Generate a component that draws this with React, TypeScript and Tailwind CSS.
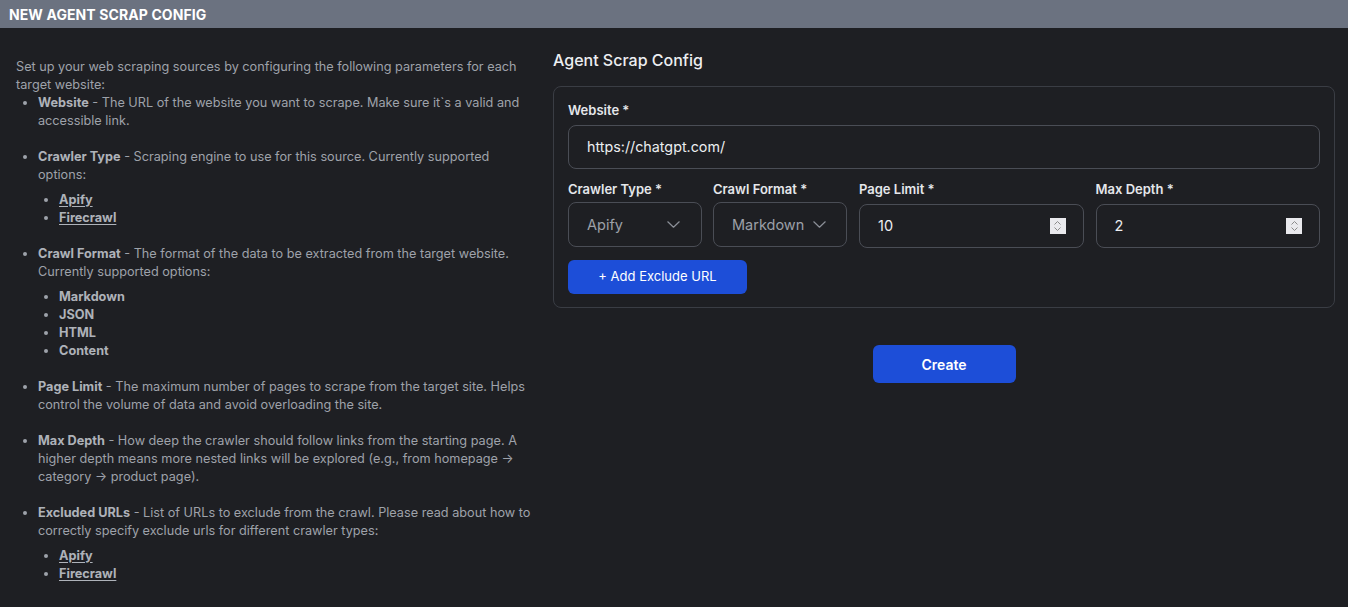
import React from "react";

const Chevron = () => (
  <svg width="13" height="7" viewBox="0 0 13 7" fill="none" className="shrink-0">
    <path d="M0.8 0.8l5.7 5.4 5.7-5.4" stroke="#8b8f97" strokeWidth="1.2" strokeLinecap="round" strokeLinejoin="round" />
  </svg>
);

const Spinner = () => (
  <div className="w-4 h-4 bg-[#e9e9ed] flex flex-col items-center justify-center gap-[2px]">
    <svg width="7" height="4" viewBox="0 0 7 4" fill="none">
      <path d="M0.5 3.5L3.5 0.5 6.5 3.5" stroke="#8a8a8a" strokeWidth="1" />
    </svg>
    <svg width="7" height="4" viewBox="0 0 7 4" fill="none">
      <path d="M0.5 0.5L3.5 3.5 6.5 0.5" stroke="#8a8a8a" strokeWidth="1" />
    </svg>
  </div>
);

const Item = ({ term, children, sub }: { term: string; children: React.ReactNode; sub?: React.ReactNode }) => (
  <li className="list-disc mb-[18px]">
    <span className="font-bold text-[#aeb2b9]">{term}</span> - {children}
    {sub}
  </li>
);

const Sub = ({ items, links }: { items: string[]; links?: boolean }) => (
  <ul className="mt-[7px] pl-[21px]">
    {items.map((t) => (
      <li key={t} className="list-disc">
        <span className={"font-bold text-[#aeb2b9] " + (links ? "underline underline-offset-2" : "")}>{t}</span>
      </li>
    ))}
  </ul>
);

export default function App() {
  return (
    <div className="min-h-[607px] w-full bg-[#1e1f23] font-['Inter',sans-serif]">
      <div className="h-[28px] bg-[#6b7280] flex items-center px-[9px]">
        <span className="text-white font-bold text-[14px] tracking-[0.1px]">NEW AGENT SCRAP CONFIG</span>
      </div>
      <div className="flex pl-4 pr-[13px] gap-[17px] pt-[20px]">
        <div className="w-[520px] shrink-0 mt-[10px] text-[12.7px] leading-[18px] text-[#9ea2aa]">
          <p className="pr-[6px]">Set up your web scraping sources by configuring the following parameters for each target website:</p>
          <ul className="pl-[22px]">
            <Item term="Website">The URL of the website you want to scrape. Make sure it`s a valid and accessible link.</Item>
            <Item term="Crawler Type" sub={<Sub items={["Apify", "Firecrawl"]} links />}>
              Scraping engine to use for this source. Currently supported options:
            </Item>
            <Item term="Crawl Format" sub={<Sub items={["Markdown", "JSON", "HTML", "Content"]} />}>
              The format of the data to be extracted from the target website. Currently supported options:
            </Item>
            <Item term="Page Limit">
              The maximum number of pages to scrape from the target site. Helps control the volume of data and avoid overloading the site.
            </Item>
            <Item term="Max Depth">
              How deep the crawler should follow links from the starting page. A higher depth means more nested links will be explored (e.g., from homepage → category → product page).
            </Item>
            <Item term="Excluded URLs" sub={<Sub items={["Apify", "Firecrawl"]} links />}>
              List of URLs to exclude from the crawl. Please read about how to correctly specify exclude urls for different crawler types:
            </Item>
          </ul>
        </div>
        <div className="flex-1 flex flex-col">
          <h2 className="text-[16px] leading-[24px] font-medium text-[#eceef1]">Agent Scrap Config</h2>
          <div className="mt-[14px] border border-[#3a3d44] rounded-[8px] px-[14px] pt-[14px] pb-[13px]">
            <label className="block text-[13px] leading-[18px] font-semibold text-[#e5e7eb]">Website *</label>
            <div className="mt-[6px] h-[44px] border border-[#4a4d55] rounded-[8px] flex items-center px-[18px] text-[14.3px] text-[#eceef1]">
              https://chatgpt.com/
            </div>
            <div className="mt-[11px] flex gap-[12px]">
              <div className="w-[134px] shrink-0">
                <div className="text-[13px] leading-[18px] font-semibold text-[#e5e7eb]">Crawler Type *</div>
                <div className="mt-[4px] h-[45px] border border-[#4a4d55] rounded-[8px] flex items-center justify-between pl-[18px] pr-[21px] text-[14.5px] text-[#9ca0a8]">
                  <span>Apify</span>
                  <Chevron />
                </div>
              </div>
              <div className="w-[134px] shrink-0 -ml-px">
                <div className="text-[13px] leading-[18px] font-semibold text-[#e5e7eb]">Crawl Format *</div>
                <div className="mt-[4px] h-[45px] border border-[#4a4d55] rounded-[8px] flex items-center justify-between pl-[18px] pr-[20px] text-[14.5px] text-[#9ca0a8]">
                  <span>Markdown</span>
                  <Chevron />
                </div>
              </div>
              <div className="flex-1">
                <div className="text-[13px] leading-[18px] font-semibold text-[#e5e7eb]">Page Limit *</div>
                <div className="mt-[6px] h-[44px] border border-[#4a4d55] rounded-[8px] flex items-center justify-between pl-[18px] pr-[17px] text-[14.5px] text-[#eceef1]">
                  <span>10</span>
                  <Spinner />
                </div>
              </div>
              <div className="flex-1">
                <div className="text-[13px] leading-[18px] font-semibold text-[#e5e7eb]">Max Depth *</div>
                <div className="mt-[6px] h-[44px] border border-[#4a4d55] rounded-[8px] flex items-center justify-between pl-[18px] pr-[17px] text-[14.5px] text-[#eceef1]">
                  <span>2</span>
                  <Spinner />
                </div>
              </div>
            </div>
            <button className="mt-[12px] w-[179px] h-[34px] rounded-[6px] bg-[#1d4ed8] text-white text-[13px]">
              + Add Exclude URL
            </button>
          </div>
          <div className="flex justify-center mt-[37px]">
            <button className="w-[143px] h-[38px] rounded-[6px] bg-[#1d4ed8] text-white text-[14px] font-semibold">
              Create
            </button>
          </div>
        </div>
      </div>
    </div>
  );
}
